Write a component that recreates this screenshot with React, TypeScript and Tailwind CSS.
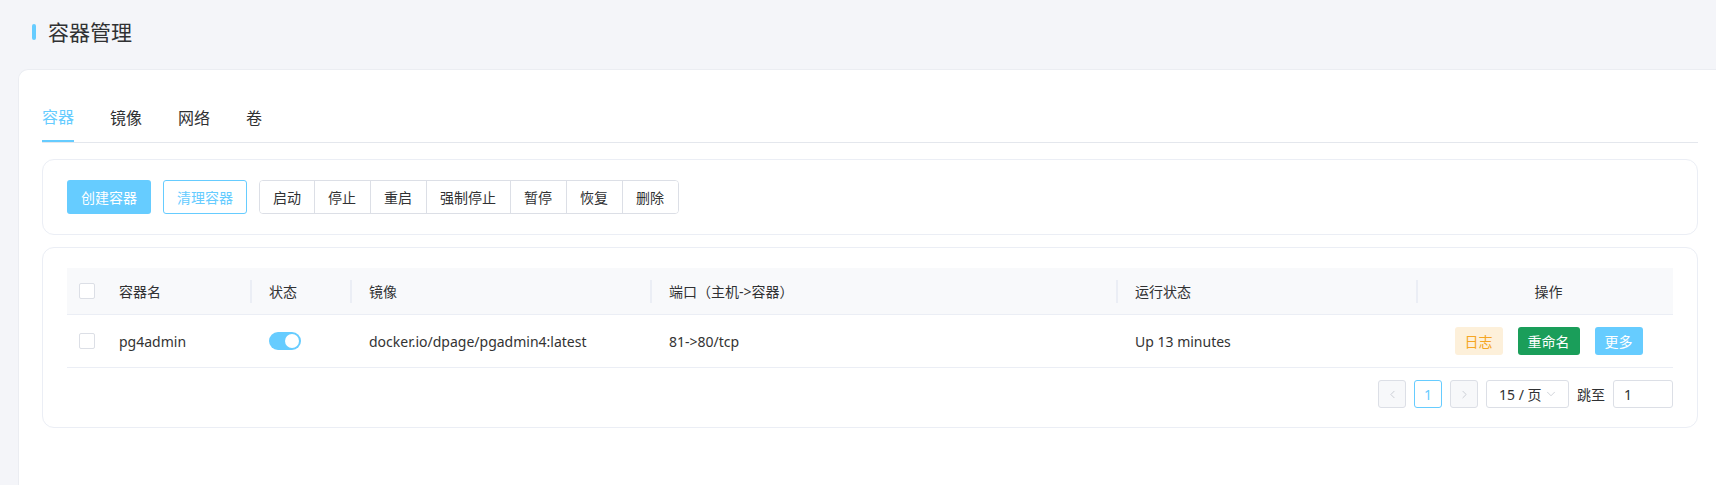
import React from 'react';
import { ChevronLeft, ChevronRight, ChevronDown } from 'lucide-react';

const font = { fontFamily: '"Noto Sans", "Noto Sans CJK SC", sans-serif' };

const tabs = ['容器', '镜像', '网络', '卷'];
const groupActions = ['启动', '停止', '重启', '强制停止', '暂停', '恢复', '删除'];

const Checkbox = () => (
    <div className="w-[16px] h-[16px] border border-[#dcdfe6] rounded-[2px] bg-white" />
);

const HeadCell = ({ w, label }: { w: string, label: string }) => (
    <div className={`${w} h-full flex items-center shrink-0`}>
        <div className="w-[2px] h-[23px] bg-[#ebeef5]" />
        <span className="ml-[17px]">{label}</span>
    </div>
);

const Switch = () => (
    <div className="w-[32px] h-[18px] rounded-full bg-[#66ccff] flex items-center justify-end p-[2px]">
        <div className="w-[14px] h-[14px] rounded-full bg-white" />
    </div>
);

const App: React.FC = () => {
    return (
        <div className="w-[1716px] min-h-[485px] bg-[#f4f5f9] overflow-hidden text-[#303133]" style={font}>
            {/* Title */}
            <div className="flex items-center h-[16px] mt-[24px] mb-[29px] pl-[32px]">
                <div className="w-[4px] h-[16px] rounded-[2px] bg-[#66ccff]" />
                <h1 className="ml-[12px] text-[21px] leading-[20px] text-[#303133]">容器管理</h1>
            </div>

            {/* Main card */}
            <div className="ml-[18px] w-[1698px] min-h-[420px] bg-white border-t border-l border-[#ebedf2] rounded-tl-[10px] pt-[24px] pl-[23px] pr-[18px]">
                {/* Tabs */}
                <div className="flex gap-[36px] border-b border-[#e4e7ed]">
                    {tabs.map((t, i) => (
                        <div
                            key={t}
                            className={i === 0
                                ? 'h-[48px] flex items-center text-[16px] text-[#66ccff] border-b-2 border-[#66ccff] -mb-px'
                                : 'h-[48px] flex items-center text-[16px] text-[#303133]'}
                        >
                            {t}
                        </div>
                    ))}
                </div>

                {/* Toolbar */}
                <div className="mt-[16px] border border-[#ebeef5] rounded-[12px] px-[24px] py-[20px] flex items-center">
                    <button className="h-[34px] px-[14px] rounded-[3px] bg-[#66ccff] text-white text-[14px]">创建容器</button>
                    <button className="ml-[12px] h-[34px] px-[13px] rounded-[3px] border border-[#66ccff] bg-white text-[#66ccff] text-[14px]">清理容器</button>
                    <div className="ml-[12px] flex h-[34px] border border-[#dcdfe6] rounded-[4px] overflow-hidden">
                        {groupActions.map((a, i) => (
                            <button
                                key={a}
                                className={i === 0
                                    ? 'px-[13px] text-[14px] text-[#303133] bg-white'
                                    : 'pl-[13px] pr-[14px] text-[14px] text-[#303133] bg-white border-l border-[#dcdfe6]'}
                            >
                                {a}
                            </button>
                        ))}
                    </div>
                </div>

                {/* Table card */}
                <div className="mt-[12px] border border-[#ebeef5] rounded-[12px] pt-[20px] px-[24px] pb-[19px]">
                    <div className="text-[14px]">
                        {/* Header */}
                        <div className="flex items-center h-[47px] bg-[#f8f9fb] border-b border-[#ebeef5]">
                            <div className="w-[40px] pl-[12px] shrink-0"><Checkbox /></div>
                            <div className="w-[143px] pl-[12px] shrink-0">容器名</div>
                            <HeadCell w="w-[100px]" label="状态" />
                            <HeadCell w="w-[300px]" label="镜像" />
                            <HeadCell w="w-[466px]" label="端口（主机->容器）" />
                            <HeadCell w="w-[300px]" label="运行状态" />
                            <div className="flex-1 h-full flex items-center">
                                <div className="w-[2px] h-[23px] bg-[#ebeef5]" />
                                <span className="flex-1 text-center pl-[6px]">操作</span>
                            </div>
                        </div>
                        {/* Row */}
                        <div className="flex items-center h-[53px] border-b border-[#ebeef5] text-[#333]">
                            <div className="w-[40px] pl-[12px] shrink-0"><Checkbox /></div>
                            <div className="w-[143px] pl-[12px] shrink-0">pg4admin</div>
                            <div className="w-[100px] pl-[19px] shrink-0"><Switch /></div>
                            <div className="w-[300px] pl-[19px] shrink-0">docker.io/dpage/pgadmin4:latest</div>
                            <div className="w-[466px] pl-[19px] shrink-0">81-&gt;80/tcp</div>
                            <div className="w-[300px] pl-[19px] shrink-0">Up 13 minutes</div>
                            <div className="flex-1 flex justify-center gap-[15px] pl-[8px]">
                                <button className="h-[28px] px-[10px] rounded-[3px] bg-[#fdf0da] text-[#f5a623]">日志</button>
                                <button className="h-[28px] px-[10px] rounded-[3px] bg-[#1a9e5a] text-white">重命名</button>
                                <button className="h-[28px] px-[10px] rounded-[3px] bg-[#66ccff] text-white">更多</button>
                            </div>
                        </div>
                    </div>

                    {/* Pagination */}
                    <div className="mt-[12px] flex justify-end items-center gap-[8px] text-[14px]">
                        <div className="w-[28px] h-[28px] flex items-center justify-center border border-[#dcdfe6] rounded-[3px] bg-[#f7f8fa]">
                            <ChevronLeft size={13} strokeWidth={1.5} className="text-[#c0c4cc]" />
                        </div>
                        <div className="w-[28px] h-[28px] flex items-center justify-center border border-[#66ccff] rounded-[3px] text-[#66ccff]">1</div>
                        <div className="w-[28px] h-[28px] flex items-center justify-center border border-[#dcdfe6] rounded-[3px] bg-[#f7f8fa]">
                            <ChevronRight size={13} strokeWidth={1.5} className="text-[#c0c4cc]" />
                        </div>
                        <div className="w-[83px] h-[28px] flex items-center border border-[#dcdfe6] rounded-[3px] pl-[12px] pr-[10px] text-[#303133]">
                            <span>15 / 页</span>
                            <ChevronDown size={14} strokeWidth={1.25} className="ml-[2px] text-[#c0c4cc]" />
                        </div>
                        <span className="text-[#303133]">跳至</span>
                        <div className="w-[60px] h-[28px] flex items-center border border-[#dcdfe6] rounded-[3px] pl-[10px] text-[#303133]">1</div>
                    </div>
                </div>
            </div>
        </div>
    );
};

export default App;
